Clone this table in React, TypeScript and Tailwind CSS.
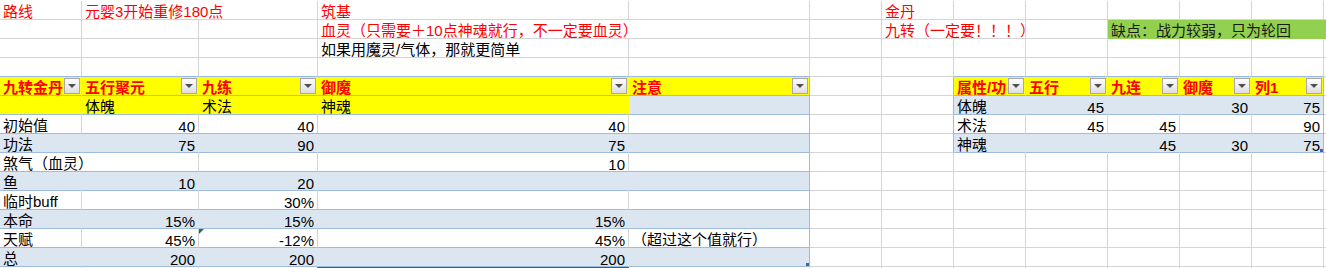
import React from 'react';

// gridline / table colours
const GREY_R = 'border-r-[#d4d4d4]';
const GREY_B = 'border-b-[#d4d4d4]';
const BLUE_R = 'border-r-[#9dbbe0]';
const BLUE_B = 'border-b-[#9dbbe0]';
const NONE_R = 'border-r-transparent';
const BAND = 'bg-[#dce6f1]';
const YELLOW = 'bg-[#ffff00]';
const RED = 'text-[#ff0000]';
const HEAD = 'font-bold text-[#ff0000]';

type CellProps = {
  children?: React.ReactNode;
  className?: string;
  r?: string;
  b?: string;
  num?: boolean;
};

const Cell: React.FC<CellProps> = ({ children, className = '', r = GREY_R, b = GREY_B, num }) => (
  <div
    className={`relative h-[19px] overflow-visible whitespace-nowrap border-r border-b px-[3px] leading-[19px] ${
      num ? 'pt-[2px] text-right' : 'pt-px'
    } ${r} ${b} ${className}`}
  >
    {children}
  </div>
);

const End: React.FC<{ b?: string }> = ({ b = GREY_B }) => <div className={`h-[19px] border-b ${b}`} />;

// autofilter button
const Filter = () => (
  <span className="absolute right-[1px] top-[1px] flex h-[16px] w-[16px] items-center justify-center border border-[#a9a9a9] bg-linear-to-b from-[#fdfdfd] to-[#dedede]">
    <span className="h-0 w-0 border-x-[4px] border-t-[4px] border-x-transparent border-t-[#505050]" />
  </span>
);

const Handle = () => (
  <span className="absolute bottom-0 right-0 h-[3px] w-[3px] bg-[#3a63b0]" />
);

type T1Props = {
  a: string;
  b?: string;
  c?: string;
  d?: string;
  e?: string;
  band?: boolean;
  wide?: boolean;
  tri?: boolean;
  handle?: boolean;
};

// columns A..E of the left table
const Table1Row: React.FC<T1Props> = ({ a, b = '', c = '', d = '', e = '', band, wide, tri, handle }) => {
  const bg = band ? BAND : 'bg-white';
  const r = band ? NONE_R : GREY_R;
  return (
    <>
      {wide ? (
        <Cell className={`col-span-2 ${bg}`} r={r} b={BLUE_B}>
          {a}
        </Cell>
      ) : (
        <>
          <Cell className={bg} r={r} b={BLUE_B}>
            {a}
          </Cell>
          <Cell className={bg} r={r} b={BLUE_B} num>
            {b}
          </Cell>
        </>
      )}
      <Cell className={bg} r={r} b={BLUE_B} num>
        {tri && (
          <span className="absolute left-0 top-0 h-0 w-0 border-r-[5px] border-t-[5px] border-r-transparent border-t-[#1d7a36]" />
        )}
        {c}
      </Cell>
      <Cell className={bg} r={r} b={BLUE_B} num>
        {d}
      </Cell>
      <Cell className={bg} r={BLUE_R} b={BLUE_B}>
        {e}
        {handle && <Handle />}
      </Cell>
    </>
  );
};

type T2Props = { h: string; i?: string; j?: string; k?: string; l?: string; band?: boolean; last?: boolean };

// columns F..M when the right table is on the row
const Table2Row: React.FC<T2Props> = ({ h, i = '', j = '', k = '', l = '', band, last }) => {
  const bg = band ? BAND : 'bg-white';
  const r = band ? NONE_R : GREY_R;
  return (
    <>
      <Cell />
      <Cell r={BLUE_R} />
      <Cell className={bg} r={r} b={BLUE_B}>
        {h}
      </Cell>
      <Cell className={bg} r={r} b={BLUE_B} num>
        {i}
      </Cell>
      <Cell className={bg} r={r} b={BLUE_B} num>
        {j}
      </Cell>
      <Cell className={bg} r={r} b={BLUE_B} num>
        {k}
      </Cell>
      <Cell className={bg} r={BLUE_R} b={BLUE_B} num>
        {l}
        {last && <Handle />}
      </Cell>
      <End />
    </>
  );
};

// columns F..M, plain sheet
const Blank = () => (
  <>
    <Cell />
    <Cell />
    <Cell />
    <Cell />
    <Cell />
    <Cell />
    <Cell />
    <End />
  </>
);

export default function App() {
  return (
    <div className="h-[268px] w-[1326px] overflow-hidden bg-white pt-px font-['Liberation_Sans','Noto_Sans_CJK_SC',sans-serif] text-[15px] text-black">
      <div className="grid grid-cols-[82px_117px_119px_311px_181px_72px_72px_72px_82px_72px_72px_72px_2px]">
        {/* row 1 */}
        <Cell className={RED}>路线</Cell>
        <Cell className={`col-span-2 ${RED}`}>元婴3开始重修180点</Cell>
        <Cell className={RED}>筑基</Cell>
        <Cell />
        <Cell />
        <Cell className={RED}>金丹</Cell>
        <Cell />
        <Cell />
        <Cell />
        <Cell />
        <Cell />
        <End />

        {/* row 2 */}
        <Cell />
        <Cell />
        <Cell />
        <Cell className={`col-span-2 ${RED}`}>血灵（只需要＋10点神魂就行，不一定要血灵）</Cell>
        <Cell />
        <Cell className={`col-span-2 ${RED}`}>九转（一定要！！！）</Cell>
        <Cell />
        <Cell className="col-span-4 bg-[#92d050] text-[#1a1a1a]" r={NONE_R} b="border-b-[#92d050]">
          缺点：战力较弱，只为轮回
        </Cell>

        {/* row 3 */}
        <Cell />
        <Cell />
        <Cell />
        <Cell>如果用魔灵/气体，那就更简单</Cell>
        <Cell />
        <Blank />

        {/* row 4 */}
        <Cell b={BLUE_B} />
        <Cell b={BLUE_B} />
        <Cell b={BLUE_B} />
        <Cell b={BLUE_B} />
        <Cell b={BLUE_B} />
        <Cell />
        <Cell />
        <Cell b={BLUE_B} />
        <Cell b={BLUE_B} />
        <Cell b={BLUE_B} />
        <Cell b={BLUE_B} />
        <Cell b={BLUE_B} />
        <End />

        {/* row 5: table headers */}
        <Cell className={`${YELLOW} ${HEAD}`} r={NONE_R} b={BLUE_B}>
          九转金丹
          <Filter />
        </Cell>
        <Cell className={`${YELLOW} ${HEAD}`} r={NONE_R} b={BLUE_B}>
          五行聚元
          <Filter />
        </Cell>
        <Cell className={`${YELLOW} ${HEAD}`} r={NONE_R} b={BLUE_B}>
          九练
          <Filter />
        </Cell>
        <Cell className={`${YELLOW} ${HEAD}`} r={NONE_R} b={BLUE_B}>
          御魔
          <Filter />
        </Cell>
        <Cell className={`${YELLOW} ${HEAD}`} r={BLUE_R} b={BLUE_B}>
          注意
          <Filter />
        </Cell>
        <Cell />
        <Cell r={BLUE_R} />
        <Cell className={`${YELLOW} ${HEAD}`} r={NONE_R} b={BLUE_B}>
          属性/功
          <Filter />
        </Cell>
        <Cell className={`${YELLOW} ${HEAD}`} r={NONE_R} b={BLUE_B}>
          五行
          <Filter />
        </Cell>
        <Cell className={`${YELLOW} ${HEAD}`} r={NONE_R} b={BLUE_B}>
          九连
          <Filter />
        </Cell>
        <Cell className={`${YELLOW} ${HEAD}`} r={NONE_R} b={BLUE_B}>
          御魔
          <Filter />
        </Cell>
        <Cell className={`${YELLOW} ${HEAD}`} r={BLUE_R} b={BLUE_B}>
          列1
          <Filter />
        </Cell>
        <End />

        {/* row 6 */}
        <Cell className={YELLOW} r={NONE_R} b={BLUE_B} />
        <Cell className={YELLOW} r={NONE_R} b={BLUE_B}>
          体魄
        </Cell>
        <Cell className={YELLOW} r={NONE_R} b={BLUE_B}>
          术法
        </Cell>
        <Cell className={YELLOW} r={NONE_R} b={BLUE_B}>
          神魂
        </Cell>
        <Cell className={BAND} r={BLUE_R} b={BLUE_B} />
        <Table2Row h="体魄" i="45" k="30" l="75" band />

        {/* row 7 */}
        <Table1Row a="初始值" b="40" c="40" d="40" />
        <Table2Row h="术法" i="45" j="45" l="90" />

        {/* row 8 */}
        <Table1Row a="功法" b="75" c="90" d="75" band />
        <Table2Row h="神魂" j="45" k="30" l="75" band last />

        {/* rows 9-14 */}
        <Table1Row a="煞气（血灵）" d="10" wide />
        <Blank />
        <Table1Row a="鱼" b="10" c="20" band />
        <Blank />
        <Table1Row a="临时buff" c="30%" />
        <Blank />
        <Table1Row a="本命" b="15%" c="15%" d="15%" band />
        <Blank />
        <Table1Row a="天赋" b="45%" c="-12%" d="45%" e="（超过这个值就行）" tri />
        <Blank />
        <Table1Row a="总" b="200" c="200" d="200" band handle />
        <Blank />

        {/* row 15, cut off; D15 is the active cell */}
        <div className="h-[2px] border-r border-r-[#d4d4d4]" />
        <div className="h-[2px] border-r border-r-[#d4d4d4]" />
        <div className="h-[2px] border-r border-r-[#d4d4d4]" />
        <div className="-ml-px h-[2px] bg-[#217346]" />
        <div className="h-[2px] border-r border-r-[#d4d4d4]" />
        <div className="h-[2px] border-r border-r-[#d4d4d4]" />
        <div className="h-[2px] border-r border-r-[#d4d4d4]" />
        <div className="h-[2px] border-r border-r-[#d4d4d4]" />
        <div className="h-[2px] border-r border-r-[#d4d4d4]" />
        <div className="h-[2px] border-r border-r-[#d4d4d4]" />
        <div className="h-[2px] border-r border-r-[#d4d4d4]" />
        <div className="h-[2px] border-r border-r-[#d4d4d4]" />
        <div className="h-[2px]" />
      </div>
    </div>
  );
}
